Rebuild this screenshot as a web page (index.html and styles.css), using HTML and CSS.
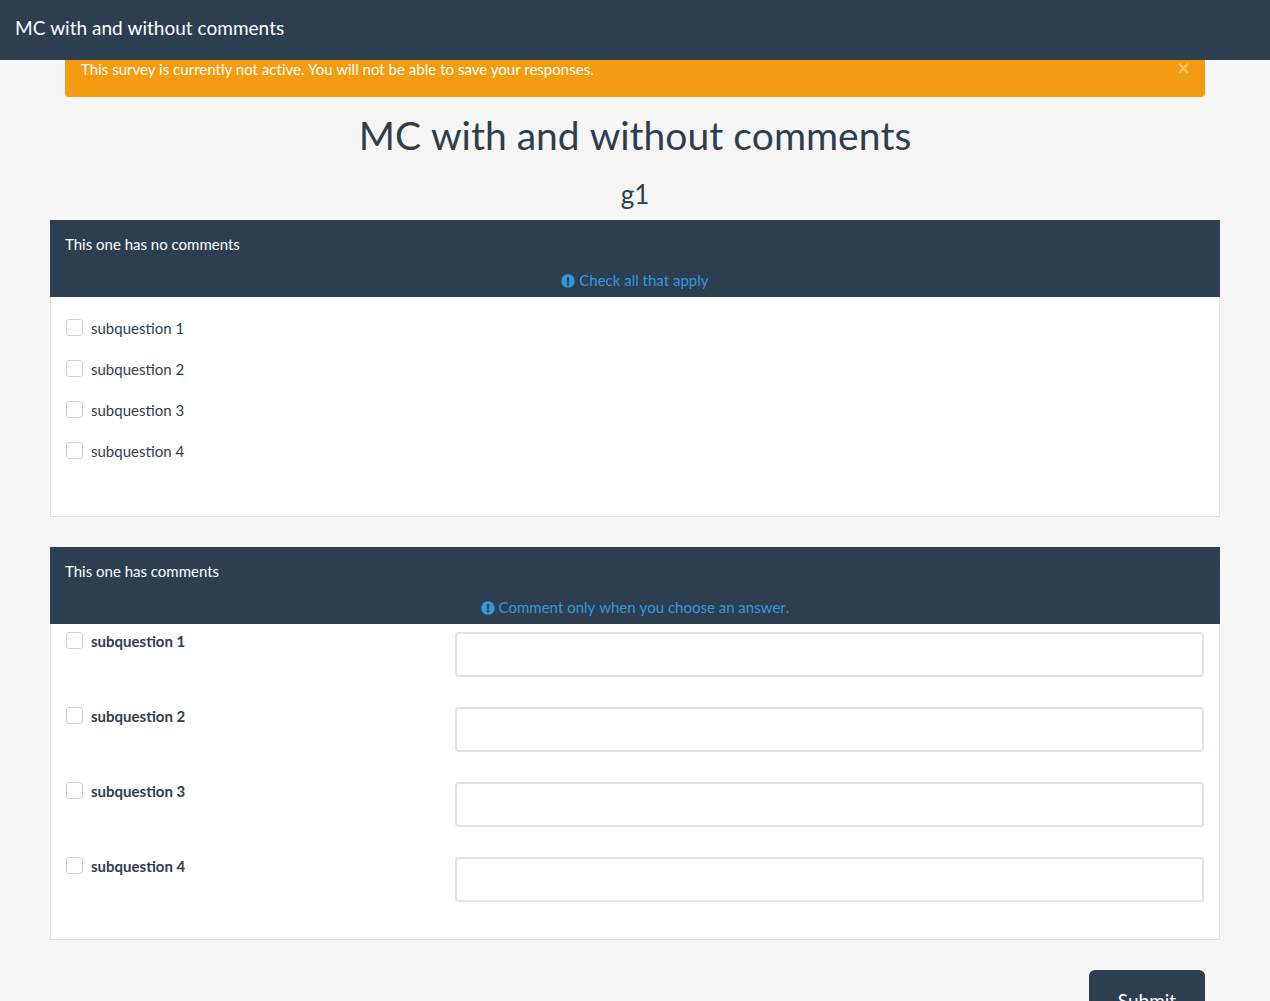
FILE: index.html
```html
<!DOCTYPE html>
<html lang="en">
<head>
<meta charset="utf-8">
<title>MC with and without comments</title>
<link rel="stylesheet" href="styles.css">
</head>
<body>
<nav class="navbar">MC with and without comments</nav>
<main class="page">
  <div class="alert">
    <span>This survey is currently not active. You will not be able to save your responses.</span>
    <span class="close">×</span>
  </div>
  <h1 class="title">MC with and without comments</h1>
  <h2 class="group">g1</h2>

  <section class="panel">
    <header class="panel-head">
      <div class="q-title">This one has no comments</div>
      <div class="q-help"><svg class="info" viewBox="0 0 14 14"><circle cx="7" cy="7" r="6.8" fill="currentColor"/><path d="M5.7 3.2h2.6l-.3 5.2H6z" fill="#2c3e50"/><circle cx="7" cy="10.4" r="1.3" fill="#2c3e50"/></svg> Check all that apply</div>
    </header>
    <div class="panel-body plain">
      <label class="opt"><span class="box"></span>subquestion 1</label>
      <label class="opt"><span class="box"></span>subquestion 2</label>
      <label class="opt"><span class="box"></span>subquestion 3</label>
      <label class="opt"><span class="box"></span>subquestion 4</label>
    </div>
  </section>

  <section class="panel">
    <header class="panel-head">
      <div class="q-title">This one has comments</div>
      <div class="q-help"><svg class="info" viewBox="0 0 14 14"><circle cx="7" cy="7" r="6.8" fill="currentColor"/><path d="M5.7 3.2h2.6l-.3 5.2H6z" fill="#2c3e50"/><circle cx="7" cy="10.4" r="1.3" fill="#2c3e50"/></svg> Comment only when you choose an answer.</div>
    </header>
    <div class="panel-body comments">
      <div class="row"><label class="opt strong"><span class="box"></span>subquestion 1</label><input class="field" type="text"></div>
      <div class="row"><label class="opt strong"><span class="box"></span>subquestion 2</label><input class="field" type="text"></div>
      <div class="row"><label class="opt strong"><span class="box"></span>subquestion 3</label><input class="field" type="text"></div>
      <div class="row"><label class="opt strong"><span class="box"></span>subquestion 4</label><input class="field" type="text"></div>
    </div>
  </section>

  <div class="actions"><button class="submit" type="button">Submit</button></div>
</main>
</body>
</html>
```
FILE: styles.css
```css
* { box-sizing: border-box; }
html, body { margin: 0; padding: 0; }
body {
  background: #f6f6f6;
  color: #2c3e50;
  font-family: Lato, "Liberation Sans", sans-serif;
  font-size: 15px;
  line-height: 21px;
}
.navbar {
  height: 60px;
  background: #2c3e50;
  color: #fff;
  font-size: 19px;
  line-height: 56px;
  padding-left: 15px;
  font-kerning: none;
}
.page { padding: 0 50px 20px; }
.alert {
  margin: 0 15px;
  height: 37px;
  padding: 0 16px;
  background: #f39c12;
  color: #fff;
  border-radius: 0 0 4px 4px;
  display: flex;
  justify-content: space-between;
  line-height: 19px;
  letter-spacing: .025px;
}
.close {
  font-size: 22px;
  font-weight: 700;
  line-height: 15px;
  opacity: .4;
  margin-right: -1px;
}
.title {
  margin: 16px 0 0;
  text-align: center;
  font-size: 39px;
  font-weight: 400;
  line-height: 45px;
  font-kerning: none;
}
.group {
  margin: 22px 0 11px;
  text-align: center;
  font-size: 26px;
  font-weight: 400;
  line-height: 29px;
}
.panel {
  background: #fff;
  border: 1px solid #dce0e3;
  border-top: 0;
  margin-bottom: 30px;
}
.panel-head {
  background: #2c3e50;
  color: #fff;
  height: 77px;
  margin: 0 -1px;
  padding: 14px 15px 0;
}
.q-title { height: 36px; }
.q-help {
  color: #3498db;
  text-align: center;
  font-kerning: none;
}
.info { width: 14px; height: 14px; vertical-align: -2px; }
.panel-body.plain { height: 219px; padding: 11px 15px 0; }
.panel-body.comments { height: 315px; padding: 8px 15px 0; }
.opt {
  display: flex;
  align-items: center;
  height: 41px;
}
.box {
  width: 17px;
  height: 17px;
  margin-right: 8px;
  margin-top: -2px;
  background: #fff;
  border: 1px solid #cfd3d6;
  border-radius: 3px;
  flex: none;
}
.row {
  display: flex;
  height: 75px;
  align-items: flex-start;
}
.opt.strong {
  width: 389px;
  height: 21px;
  font-weight: 700;
  margin-top: -1px;
  flex: none;
}
.field {
  display: block;
  flex: none;
  width: 749px;
  height: 45px;
  background: #fff;
  border: 2px solid #dce4ec;
  border-radius: 4px;
  outline: 0;
}
.actions {
  display: flex;
  justify-content: flex-end;
  padding-right: 15px;
}
.submit {
  width: 116px;
  height: 60px;
  background: #2c3e50;
  color: #fff;
  border: 0;
  border-radius: 6px;
  font-family: inherit;
  font-size: 19px;
  line-height: 27px;
}
```
